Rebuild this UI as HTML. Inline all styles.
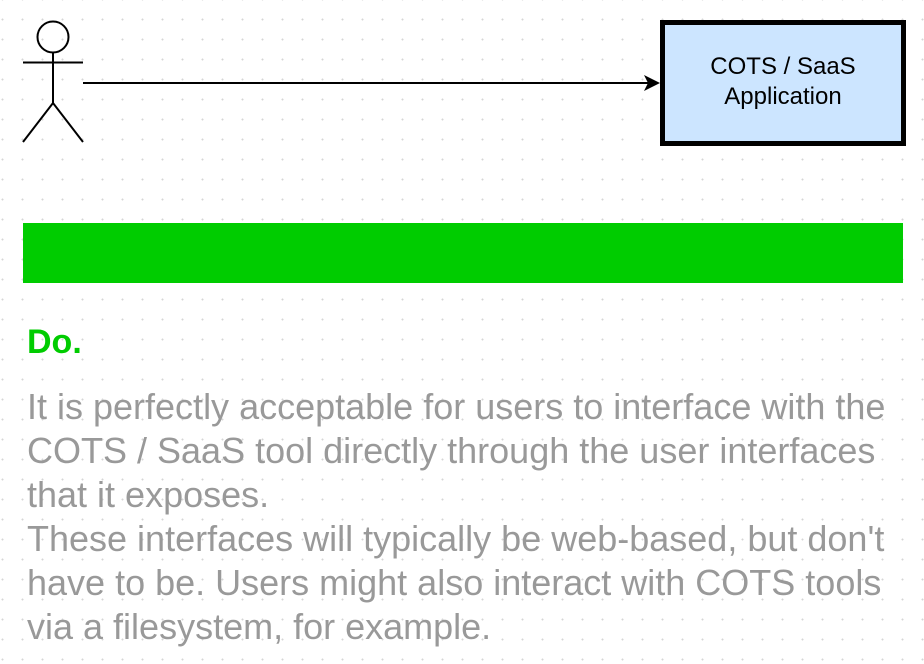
<!DOCTYPE html>
<html><head><style>
html,body{margin:0;padding:0}
body{width:924px;height:664px;position:relative;overflow:hidden;background:#fff;
background-image:radial-gradient(circle,#d6d6d6 0.9px,transparent 1.1px);background-size:20px 20px;background-position:-7.5px 9.5px;font-family:"Liberation Sans",sans-serif}
.box{position:absolute;left:660px;top:20px;width:236px;height:116px;border:5px solid #000;background:#cce5ff;display:flex;align-items:center;justify-content:center;text-align:center;font-size:24px;line-height:30px;color:#000;padding-bottom:2px;box-sizing:content-box}
.bar{position:absolute;left:23px;top:223px;width:880px;height:60px;background:#00cc00}
.do{position:absolute;left:27px;top:322px;font-size:34px;font-weight:bold;color:#00cc00;line-height:40px}
.p{position:absolute;left:27px;top:385px;width:900px;font-size:36px;line-height:44px;color:#999;white-space:nowrap}
</style></head><body>
<svg width="924" height="664" style="position:absolute;left:0;top:0">
<circle cx="53" cy="37" r="15.5" fill="none" stroke="#000" stroke-width="2"/>
<line x1="53" y1="52.5" x2="53" y2="103" stroke="#000" stroke-width="2"/>
<line x1="23" y1="62.5" x2="83" y2="62.5" stroke="#000" stroke-width="2"/>
<polyline points="23,142 53,103 83,142" fill="none" stroke="#000" stroke-width="2"/>
<line x1="83" y1="83" x2="652" y2="83" stroke="#000" stroke-width="2"/>
<path d="M660 83 L644 75 L648 83 L644 91 Z" fill="#000"/>
</svg>
<div class="box" style="height:114px">COTS / SaaS<br>Application</div>
<div class="bar"></div>
<div class="do">Do.</div>
<div class="p">It is perfectly acceptable for users to interface with the<br>COTS / SaaS tool directly through the user interfaces<br>that it exposes.<br>These interfaces will typically be web-based, but don't<br>have to be. Users might also interact with COTS tools<br>via a filesystem, for example.</div>
</body></html>
